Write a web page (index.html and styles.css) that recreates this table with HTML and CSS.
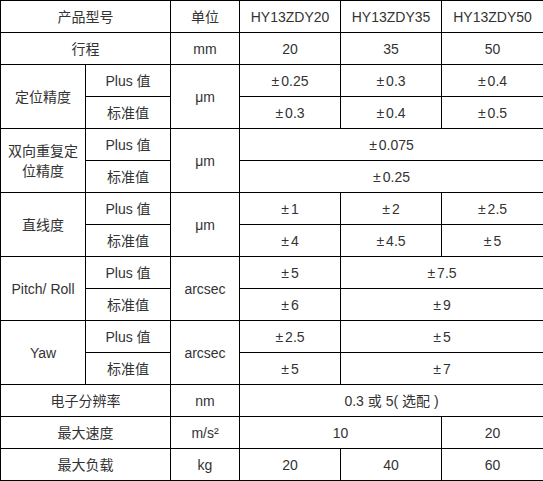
FILE: index.html
```html
<!DOCTYPE html>
<html lang="zh-CN">
<head>
<meta charset="utf-8">
<title>HY13ZDY 参数表</title>
<link rel="stylesheet" href="styles.css">
</head>
<body>
<table class="spec">
  <colgroup>
    <col class="c-label">
    <col class="c-sub">
    <col class="c-unit">
    <col class="c-val">
    <col class="c-val">
    <col class="c-val-last">
  </colgroup>
  <tbody>
    <tr><td colspan="2">产品型号</td><td>单位</td><td>HY13ZDY20</td><td>HY13ZDY35</td><td>HY13ZDY50</td></tr>
    <tr><td colspan="2">行程</td><td>mm</td><td>20</td><td>35</td><td>50</td></tr>
    <tr><td rowspan="2">定位精度</td><td>Plus 值</td><td rowspan="2">μm</td><td><span class="pm">±</span>0.25</td><td><span class="pm">±</span>0.3</td><td><span class="pm">±</span>0.4</td></tr>
    <tr><td>标准值</td><td><span class="pm">±</span>0.3</td><td><span class="pm">±</span>0.4</td><td><span class="pm">±</span>0.5</td></tr>
    <tr><td rowspan="2" class="wrap">双向重复定位精度</td><td>Plus 值</td><td rowspan="2">μm</td><td colspan="3"><span class="pm">±</span>0.075</td></tr>
    <tr><td>标准值</td><td colspan="3"><span class="pm">±</span>0.25</td></tr>
    <tr><td rowspan="2">直线度</td><td>Plus 值</td><td rowspan="2">μm</td><td><span class="pm">±</span>1</td><td><span class="pm">±</span>2</td><td><span class="pm">±</span>2.5</td></tr>
    <tr><td>标准值</td><td><span class="pm">±</span>4</td><td><span class="pm">±</span>4.5</td><td><span class="pm">±</span>5</td></tr>
    <tr><td rowspan="2">Pitch/ Roll</td><td>Plus 值</td><td rowspan="2">arcsec</td><td><span class="pm">±</span>5</td><td colspan="2"><span class="pm">±</span>7.5</td></tr>
    <tr><td>标准值</td><td><span class="pm">±</span>6</td><td colspan="2"><span class="pm">±</span>9</td></tr>
    <tr><td rowspan="2">Yaw</td><td>Plus 值</td><td rowspan="2">arcsec</td><td><span class="pm">±</span>2.5</td><td colspan="2"><span class="pm">±</span>5</td></tr>
    <tr><td>标准值</td><td><span class="pm">±</span>5</td><td colspan="2"><span class="pm">±</span>7</td></tr>
    <tr><td colspan="2">电子分辨率</td><td>nm</td><td colspan="3">0.3 或 5( 选配 )</td></tr>
    <tr><td colspan="2">最大速度</td><td>m/s²</td><td colspan="2">10</td><td>20</td></tr>
    <tr><td colspan="2">最大负载</td><td>kg</td><td>20</td><td>40</td><td>60</td></tr>
  </tbody>
</table>
</body>
</html>
```
FILE: styles.css
```css
html, body {
  margin: 0;
  padding: 0;
  background: #ffffff;
}

.spec {
  border-collapse: collapse;
  table-layout: fixed;
  width: 543px;
  font-family: "Liberation Sans", "Noto Sans CJK SC", sans-serif;
  font-size: 14px;
  color: #333333;
}

.c-label { width: 85px; }
.c-sub { width: 85px; }
.c-unit { width: 69px; }
.c-val { width: 101px; }
.c-val-last { width: 102px; }

.spec td {
  border: 1px solid #000000;
  height: 31px;
  padding: 0 4px;
  text-align: center;
  vertical-align: middle;
  line-height: 20px;
  white-space: nowrap;
}

.spec td.wrap {
  white-space: normal;
  padding: 0 2px;
}

.pm {
  margin-right: 2px;
}
```
